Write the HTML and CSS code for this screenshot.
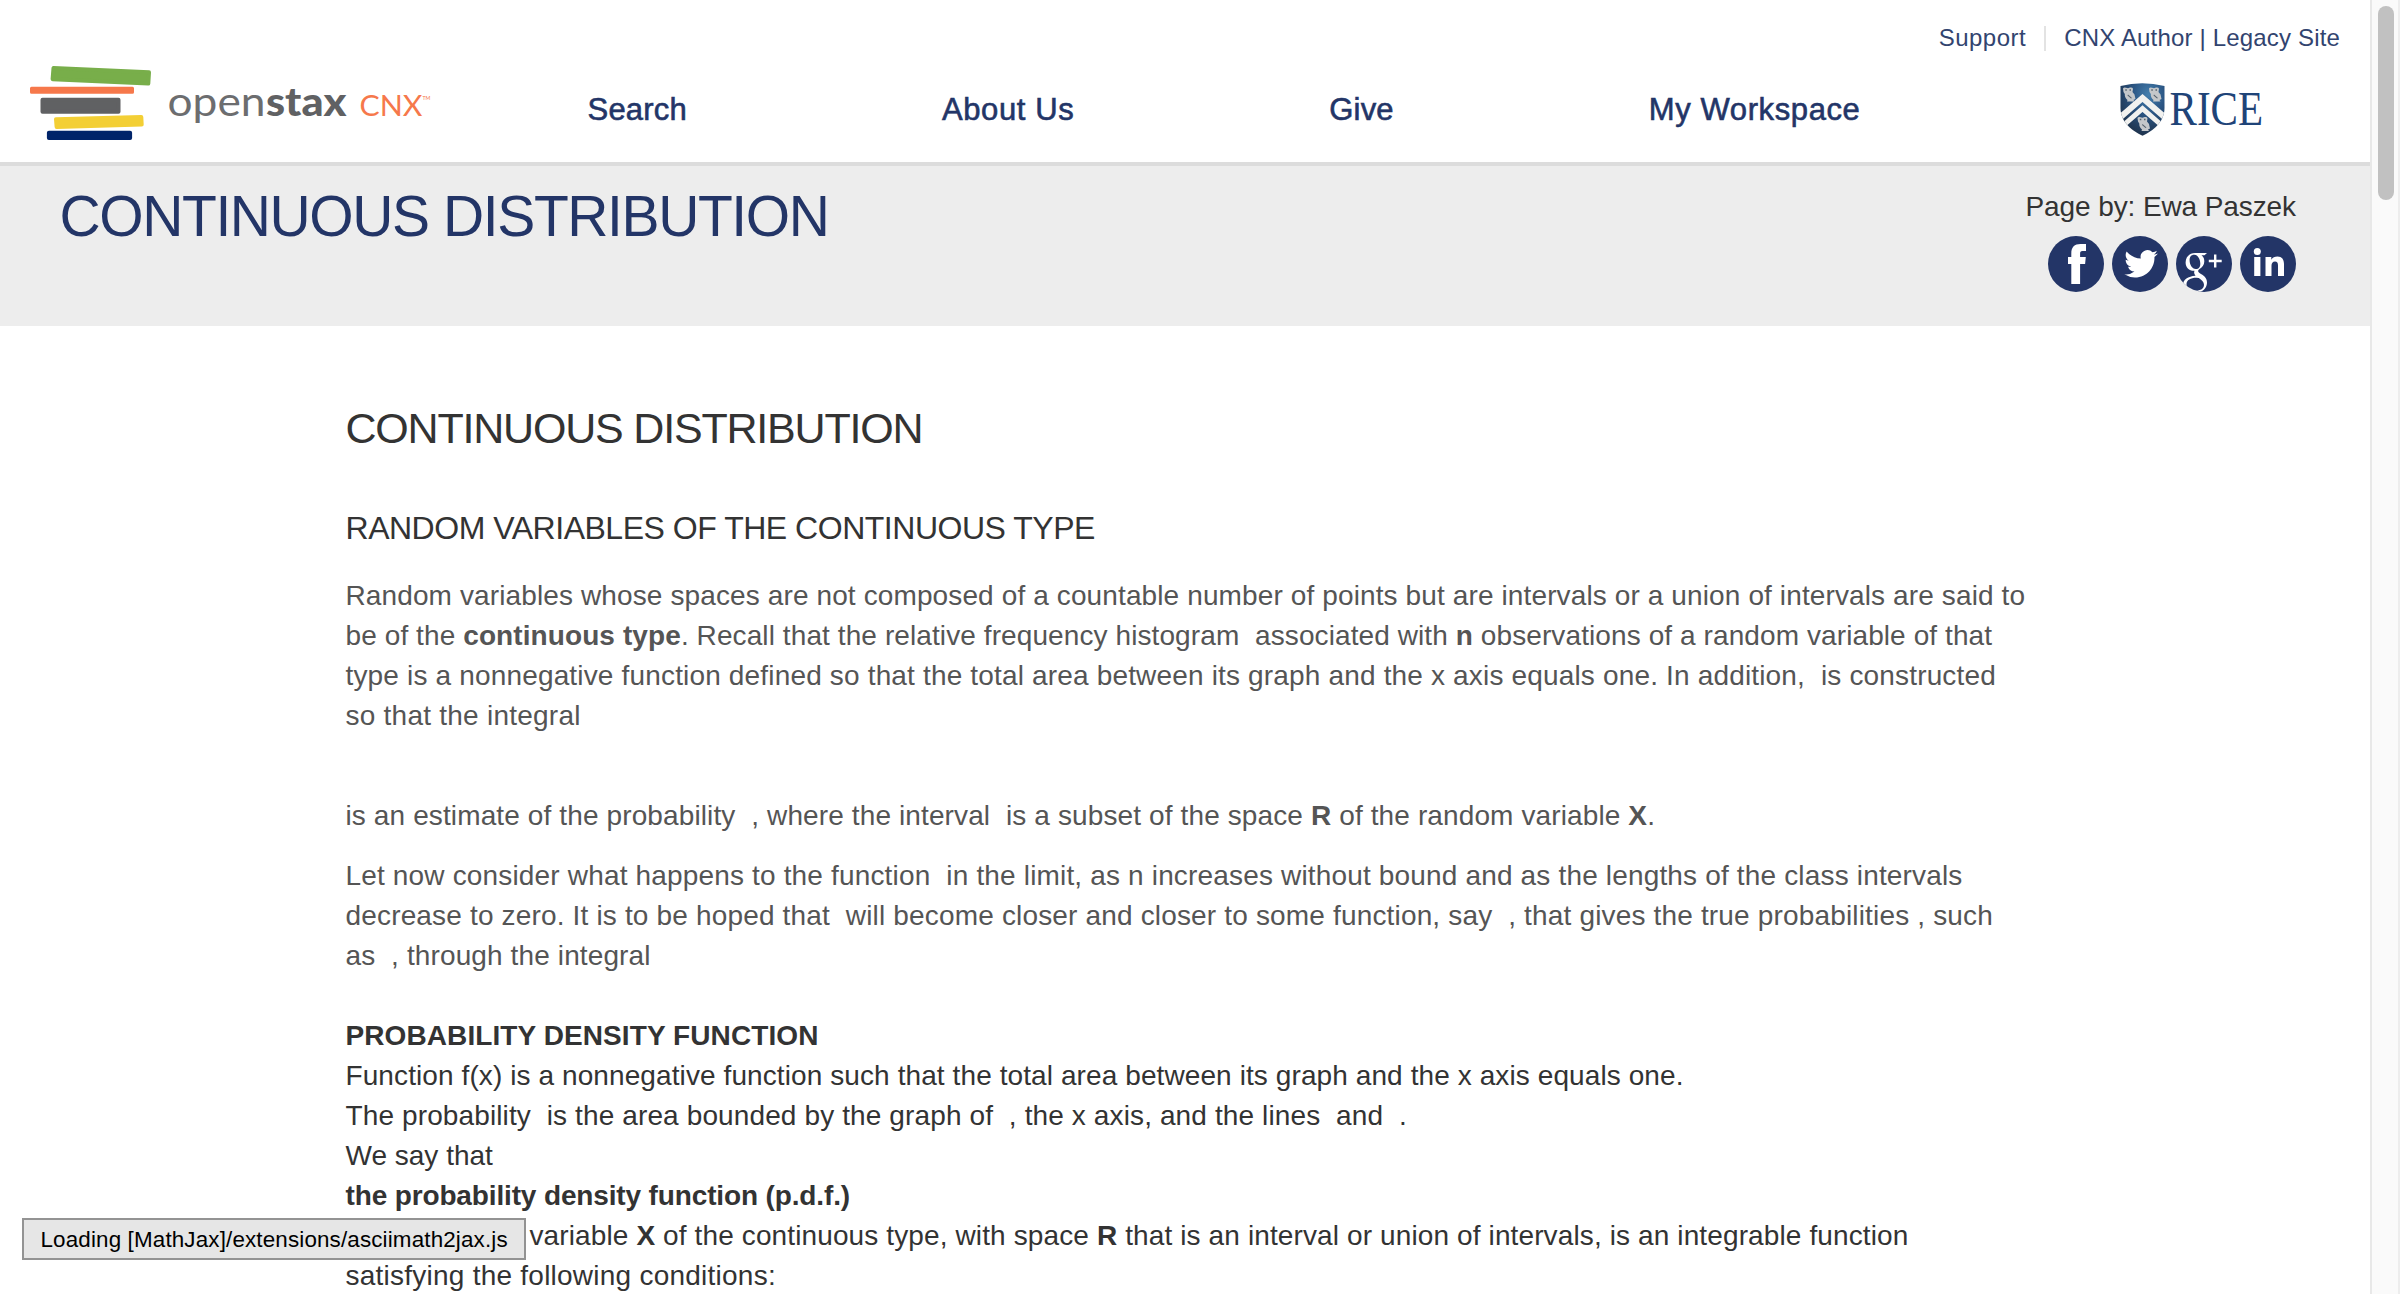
FILE: index.html
```html
<!DOCTYPE html>
<html lang="en">
<head>
<meta charset="utf-8">
<title>Continuous Distribution - OpenStax CNX</title>
<link rel="stylesheet" href="styles.css">
</head>
<body>
<div class="viewport">
  <div class="page">
    <header class="header">
      <div class="utility">
        <a class="support">Support</a>
        <span class="divider"></span>
        <a class="legacy">CNX Author | Legacy Site</a>
      </div>
      <div class="navbar">
        <svg class="logo" width="402" height="84" viewBox="30 60 402 84">
          <g stroke-linejoin="round" stroke-width="4">
            <path fill="#78ae4a" stroke="#78ae4a" d="M53.5 68 149 72.3 148.3 83.6 52.6 79.2z"/>
            <path fill="#f6784b" stroke="#f6784b" stroke-width="3" d="M31.5 88.3H132.5V92.3H31.5z"/>
            <path fill="#606163" stroke="#606163" d="M42.5 99.8H118.5V111.8H42.5z"/>
            <path fill="#f3cf35" stroke="#f3cf35" d="M56 119.2 141.3 117 141.7 124.6 56.6 126.9z"/>
            <path fill="#00246a" stroke="#00246a" d="M48.9 132.7H130.1V138H48.9z"/>
          </g>
          <text class="logo-open" x="167.5" y="116" textLength="98" lengthAdjust="spacingAndGlyphs">open</text>
          <text class="logo-stax" x="266" y="116" textLength="80.5" lengthAdjust="spacingAndGlyphs">stax</text>
          <text class="logo-cnx" x="359.5" y="115.5" textLength="63" lengthAdjust="spacingAndGlyphs">CNX</text>
          <text class="logo-tm" x="422.5" y="99.5" textLength="8" lengthAdjust="spacingAndGlyphs">TM</text>
        </svg>
        <nav class="nav">
          <a>Search</a>
          <a class="wide">About Us</a>
          <a>Give</a>
          <a class="wide">My Workspace</a>
        </nav>
        <svg class="rice" width="150" height="60" viewBox="2118 80 150 60">
          <defs>
            <radialGradient id="shield" cx=".62" cy=".25" r=".75">
              <stop offset="0" stop-color="#447fae"/><stop offset=".45" stop-color="#2b5583"/><stop offset="1" stop-color="#1d3048"/>
            </radialGradient>
            <clipPath id="shieldClip"><path d="M2119.5 86Q2141 80.5 2163.5 86V108C2163.5 122 2152 131 2141.5 135.7 2131 131 2119.5 122 2119.5 108z"/></clipPath>
            <g id="owl" fill="#c4c7ca">
              <path d="M0 1.5Q1 0 3 .8L5 1.2 7 .5Q9.5 0 10 1.8L9.5 5 11.5 7.5 12.5 12 10.5 13 11.5 14.5H4L4.5 13Q1.5 10.5 1.8 7L.5 5z"/>
              <path fill="#56616d" d="M2.3 2.2h1.500v1.500H2.300zM6.500 2.200H8v1.500H6.500zM5 7.500l4 3.500-1 .6-3.500-3z"/>
            </g>
          </defs>
          <g clip-path="url(#shieldClip)">
            <path fill="url(#shield)" d="M2118 80h48v58h-48z"/>
            <path fill="none" stroke="#f1f1ef" stroke-width="6" d="M2115 121 2141.5 98 2168 121"/>
            <path fill="none" stroke="#f1f1ef" stroke-width="5" d="M2117 130 2141.5 108.5 2166 130"/>
            <use href="#owl" x="2122" y="87"/>
            <use href="#owl" x="2148" y="87"/>
            <use href="#owl" x="2136.5" y="116.5"/>
          </g>
          <text class="rice-word" x="2168.5" y="124.8" textLength="93.5" lengthAdjust="spacingAndGlyphs">RICE</text>
        </svg>
      </div>
    </header>

    <section class="banner">
      <h1>CONTINUOUS DISTRIBUTION</h1>
      <div class="byline">
        <div class="author">Page by: Ewa Paszek</div>
        <div class="social">
          <svg width="56" height="56" viewBox="0 0 56 56"><circle class="disc" cx="28" cy="28" r="28"/><path fill="#fff" d="M23.3 48V28H20V21h3.3V17.5C23.3 11 26.5 8 32.5 8H38v7h-3.500c-2 0-2.400 1-2.400 2.800V21h5.700l-.7 7h-5V48z"/></svg>
          <svg width="56" height="56" viewBox="0 0 56 56"><circle class="disc" cx="28" cy="28" r="28"/><path fill="#fff" transform="translate(12.3 11) scale(1.4)" d="M23.950 4.570a10 10 0 0 1-2.820.77 4.960 4.960 0 0 0 2.160-2.720c-.95.550-2 .95-3.130 1.180a4.920 4.920 0 0 0-8.380 4.480C7.690 8.090 4.070 6.130 1.640 3.160a4.820 4.820 0 0 0-.67 2.480c0 1.710.87 3.210 2.190 4.100a4.900 4.900 0 0 1-2.230-.62v.06a4.920 4.920 0 0 0 3.950 4.830 5 5 0 0 1-2.210.08 4.940 4.940 0 0 0 4.600 3.420A9.870 9.870 0 0 1 0 19.540a14 14 0 0 0 7.550 2.210c9.050 0 14-7.500 14-13.980 0-.21 0-.42-.02-.63a9.940 9.940 0 0 0 2.460-2.550z"/></svg>
          <svg width="56" height="56" viewBox="0 0 56 56"><clipPath id="discClip"><circle cx="28" cy="28" r="28"/></clipPath><circle class="disc" cx="28" cy="28" r="28"/><g clip-path="url(#discClip)"><path fill="#fff" fill-rule="evenodd" d="M19 17H31L28.5 19.2H25.5C28 21 28.3 23.5 28.3 25.5 28.3 29 26 31.5 23.5 33 21.5 34.5 21.8 35.8 23.5 37 27.5 39.5 31 41.5 31 46.5 31 52.5 26 57 18 57 11 57 7 53.5 7 49 7 43.5 12 40.2 19.5 39.7 18 38 17.8 36.5 18.5 34.8 13 35 9.6 31.5 9.6 26.5 9.6 21 13.5 17 19 17zM18.3 18.8C15 18.8 13.6 21 13.6 24.3 13.6 28.5 16 33 19.8 33 23 33 24.3 30.8 24.3 27.7 24.3 23.5 22 18.8 18.3 18.8zM20.5 41.7C14.5 41.7 10.5 44 10.5 48.3 10.5 52 14 54.8 19.5 54.8 24.8 54.8 28 52.5 28 48.8 28 45.7 25.5 43.8 22.8 41.9z"/><path stroke="#fff" stroke-width="2.4" d="M32.8 25H45.7M39.2 18.5V31.5"/></g></svg>
          <svg width="56" height="56" viewBox="0 0 56 56"><circle class="disc" cx="28" cy="28" r="28"/><g fill="#fff"><circle cx="17.3" cy="15.5" r="3.5"/><path d="M14.2 21h6.2V40h-6.2zM25.5 21h5.8v2.7C32.5 21.7 34.7 20.5 37.5 20.5 42 20.5 44 23.5 44 28V40H38V29.5C38 27 37.2 25.5 35 25.5 32.7 25.5 31.5 27.2 31.5 29.7V40H25.5z"/></g></svg>
        </div>
      </div>
    </section>

    <main class="content">
      <h2>CONTINUOUS DISTRIBUTION</h2>
      <h3>RANDOM VARIABLES OF THE CONTINUOUS TYPE</h3>
      <p class="soft">
        <span class="line ls-13">Random variables whose spaces are not composed of a countable number of points but are intervals or a union of intervals are said to</span>
        <span class="line ls-10">be of the <b>continuous type</b>. Recall that the relative frequency histogram&nbsp; associated with <b>n</b> observations of a random variable of that</span>
        <span class="line ls-17">type is a nonnegative function defined so that the total area between its graph and the x axis equals one. In addition,&nbsp; is constructed</span>
        <span class="line ls-24">so that the integral</span>
      </p>
      <p class="soft after-equation">
        <span class="line ls-13">is an estimate of the probability&nbsp; , where the interval&nbsp; is a subset of the space <b>R</b> of the random variable <b>X</b>.</span>
      </p>
      <p class="soft next">
        <span class="line ls-17">Let now consider what happens to the function&nbsp; in the limit, as n increases without bound and as the lengths of the class intervals</span>
        <span class="line ls-17">decrease to zero. It is to be hoped that&nbsp; will become closer and closer to some function, say&nbsp; , that gives the true probabilities , such</span>
        <span class="line ls-13">as&nbsp; , through the integral</span>
      </p>
      <div class="definition">
        <span class="line ls-10"><b>PROBABILITY DENSITY FUNCTION</b></span>
        <span class="line ls-10">Function f(x) is a nonnegative function such that the total area between its graph and the x axis equals one.</span>
        <span class="line ls-13">The probability&nbsp; is the area bounded by the graph of&nbsp; , the x axis, and the lines&nbsp; and&nbsp; .</span>
        <span class="line">We say that</span>
        <span class="line ls-tight"><b>the probability density function (p.d.f.)</b></span>
        <span class="line ls-13 continued">variable <b>X</b> of the continuous type, with space <b>R</b> that is an interval or union of intervals, is an integrable function</span>
        <span class="line ls-24">satisfying the following conditions:</span>
      </div>
    </main>
  </div>
  <div class="scrollbar"><div class="thumb"></div></div>
  <div class="status">Loading [MathJax]/extensions/asciimath2jax.js</div>
</div>
</body>
</html>
```
FILE: styles.css
```css
* { box-sizing: border-box; }
body {
  margin: 0;
  font: 28px/40px "Liberation Sans", Arial, sans-serif;
  color: #333;
  background: #fff;
}
h1, h2, h3, p { margin: 0; font-weight: 400; }
svg { display: block; flex: none; overflow: visible; }

.viewport {
  display: flex;
  position: relative;
  height: 1294px;
  overflow: hidden;
}
.page { flex: 1; min-width: 0; }

.header {
  height: 166px;
  border-bottom: 4px solid #dcdcdc;
}
.utility {
  display: flex;
  justify-content: flex-end;
  height: 52px;
  padding: 23px 30px 0 0;
  font-size: 24px;
  line-height: 30px;
  color: #32446f;
}
.support { letter-spacing: .5px; }
.legacy { letter-spacing: .17px; }
.divider {
  width: 2px;
  height: 25px;
  margin: 3px 18px 0;
  background: #e3e3e3;
}
.navbar { display: flex; padding-left: 30px; }
.logo { margin-top: 8px; }
.logo text { font-family: Lato, sans-serif; }
.logo-open { font-size: 40px; font-weight: 400; fill: #6c6d6f; }
.logo-stax { font-size: 40px; font-weight: 900; fill: #606163; }
.logo-cnx { font-size: 28px; fill: #f6784b; }
.logo-tm { font-size: 5px; fill: #f6784b; }
.nav {
  display: flex;
  gap: 255px;
  margin: 38px 0 0 155.5px;
  font-size: 31px;
  color: #233567;
  -webkit-text-stroke: .6px #233567;
}
.nav a { letter-spacing: .2px; white-space: nowrap; }
.nav .wide { letter-spacing: .6px; }
.rice { margin: 28px 0 0 258.5px; }
.rice-word {
  font-family: "Liberation Serif", serif;
  font-size: 49px;
  fill: #1f4478;
}

.banner {
  display: flex;
  justify-content: space-between;
  height: 160px;
  padding: 20px 74px 0 59.5px;
  background: #ededed;
}
.banner h1 {
  font-size: 57px;
  line-height: 60px;
  letter-spacing: -1.4px;
  color: #233567;
}
.author { padding-top: 1px; margin-bottom: 9px; letter-spacing: -.1px; }
.social { display: flex; justify-content: flex-end; gap: 8px; }
.disc { fill: #233567; }

.content { padding: 72px 0 0 345.5px; }
h2 {
  margin-bottom: 50px;
  font-size: 43px;
  line-height: 60px;
  letter-spacing: -1.2px;
}
h3 {
  margin-bottom: 28px;
  font-size: 32px;
  letter-spacing: -.48px;
}
.soft { color: #555; }
.after-equation { margin-top: 60px; }
.next { margin-top: 20px; }
.definition { margin-top: 40px; }
.line { display: block; white-space: nowrap; }
.continued { padding-left: 184px; }
.ls-10 { letter-spacing: .095px; }
.ls-13 { letter-spacing: .12px; }
.ls-17 { letter-spacing: .165px; }
.ls-24 { letter-spacing: .24px; }
.ls-tight { letter-spacing: -.14px; }

.scrollbar {
  width: 30px;
  padding: 6px 4px 0 6px;
  border-left: 2px solid #e8e8e8;
  border-right: 2px solid #ededed;
  background: #fafafa;
}
.thumb {
  width: 16px;
  height: 194px;
  border-radius: 8px;
  background: #c1c1c1;
}

.status {
  position: absolute;
  left: 22px;
  top: 1218px;
  width: 504px;
  height: 42px;
  padding-left: 16.5px;
  border: 2px solid #939393;
  background: #e6e6e6;
  font-size: 22.4px;
  line-height: 39px;
  letter-spacing: .15px;
  white-space: nowrap;
  color: #000;
}
```
